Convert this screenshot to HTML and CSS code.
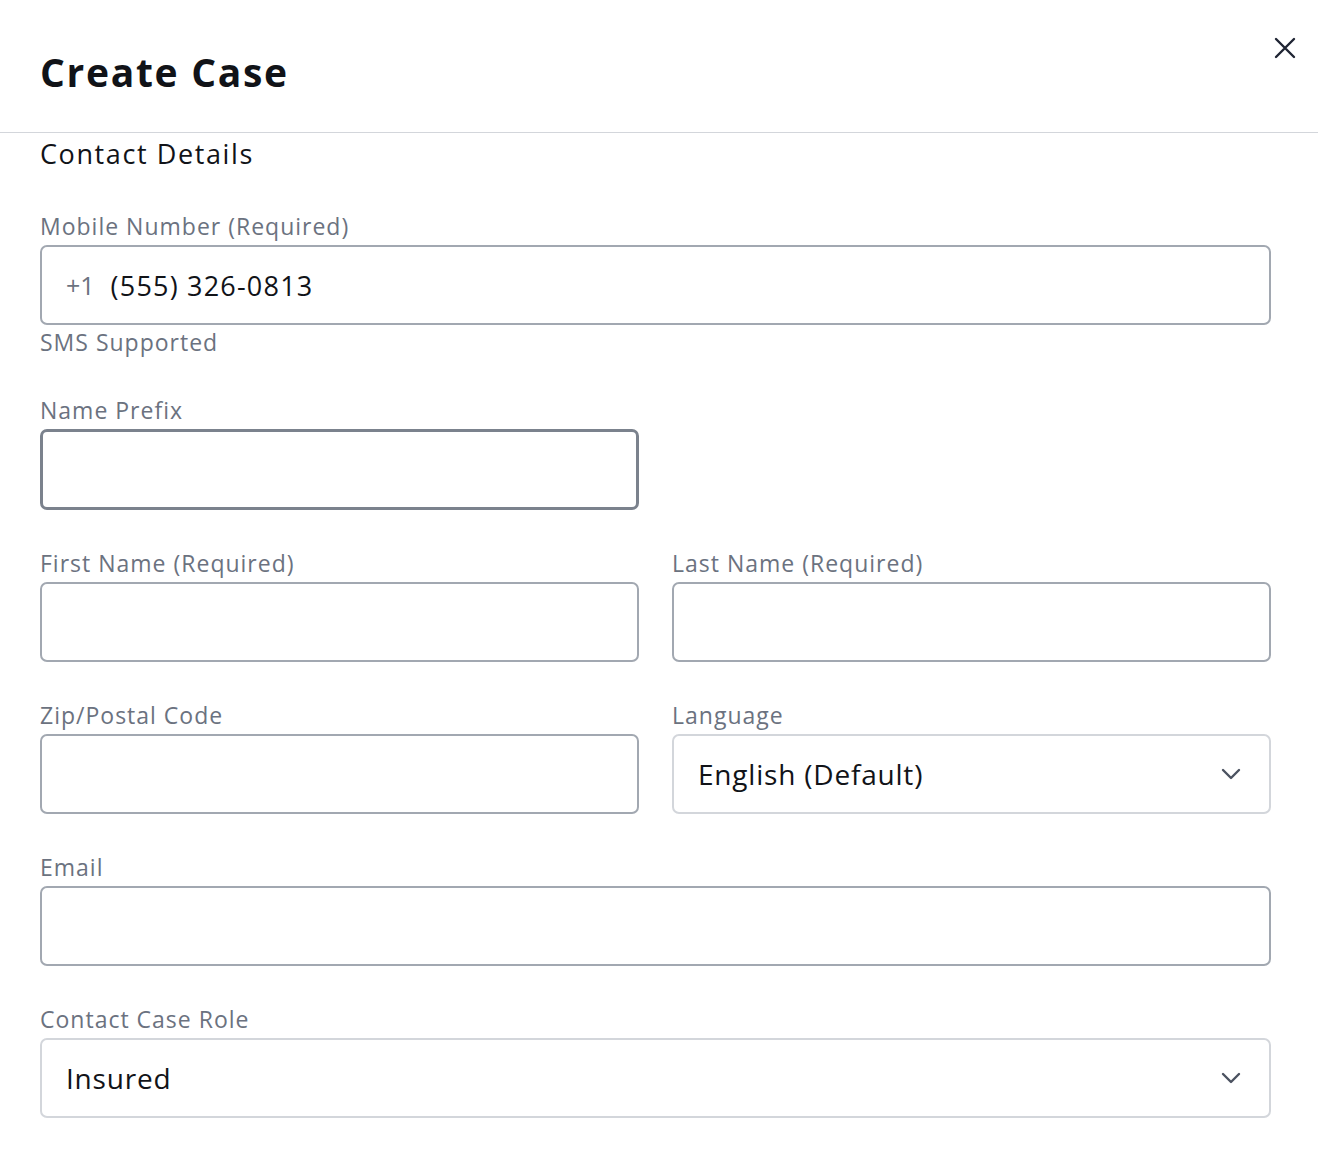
FILE: index.html
```html
<!DOCTYPE html>
<html lang="en">
<head>
    <meta charset="UTF-8">
    <meta name="viewport" content="width=device-width, initial-scale=1.0">
    <title>Create Case</title>
    <link rel="stylesheet" href="styles.css">
</head>
<body>
    <div class="modal">
        <div class="modal-header">
            <h1>Create Case</h1>
            <button class="close-btn" aria-label="Close">
                <svg width="22" height="22" viewBox="0 0 22 22" fill="none">
                    <path d="M2 2L20 20M20 2L2 20" stroke="#1f2433" stroke-width="2.4" stroke-linecap="round"/>
                </svg>
            </button>
        </div>

        <div class="modal-body">
            <h2>Contact Details</h2>

            <div class="form-grid">
                <div class="field full">
                    <label>Mobile Number (Required)</label>
                    <div class="input phone">
                        <span class="dial">+1</span>
                        <span class="value">(555) 326-0813</span>
                    </div>
                    <div class="hint">SMS Supported</div>
                </div>

                <div class="field">
                    <label>Name Prefix</label>
                    <div class="input focused"></div>
                </div>
                <div class="field"></div>

                <div class="field">
                    <label>First Name (Required)</label>
                    <div class="input"></div>
                </div>
                <div class="field">
                    <label>Last Name (Required)</label>
                    <div class="input"></div>
                </div>

                <div class="field">
                    <label>Zip/Postal Code</label>
                    <div class="input"></div>
                </div>
                <div class="field">
                    <label>Language</label>
                    <div class="input select">
                        <span class="value">English (Default)</span>
                        <svg class="chevron" width="20" height="12" viewBox="0 0 20 12" fill="none">
                            <path d="M2 2L10 10L18 2" stroke="#4b5260" stroke-width="2.4" stroke-linecap="round" stroke-linejoin="round"/>
                        </svg>
                    </div>
                </div>

                <div class="field full">
                    <label>Email</label>
                    <div class="input"></div>
                </div>

                <div class="field full">
                    <label>Contact Case Role</label>
                    <div class="input select">
                        <span class="value">Insured</span>
                        <svg class="chevron" width="20" height="12" viewBox="0 0 20 12" fill="none">
                            <path d="M2 2L10 10L18 2" stroke="#4b5260" stroke-width="2.4" stroke-linecap="round" stroke-linejoin="round"/>
                        </svg>
                    </div>
                </div>
            </div>
        </div>
    </div>
</body>
</html>
```

FILE: styles.css
```css
:root {
    --text: #111318;
    --muted: #6b7280;
    --border: #a2a8b1;
    --border-light: #d3d6db;
    --focus: #7b828d;
}

* {
    box-sizing: border-box;
}

body {
    margin: 0;
    font-family: 'Open Sans', 'Noto Sans', sans-serif;
    color: var(--text);
    background: #fff;
}

.modal {
    width: 1318px;
    min-height: 1156px;
}

.modal-header {
    display: flex;
    justify-content: space-between;
    align-items: flex-start;
    height: 133px;
    padding: 0 22px 0 40px;
    border-bottom: 1px solid var(--border-light);
}

.modal-header h1 {
    margin: 48px 0 0;
    font-size: 39px;
    line-height: 48px;
    font-weight: 700;
    letter-spacing: 1.7px;
}

.close-btn {
    margin-top: 37px;
    padding: 0;
    border: none;
    background: none;
    cursor: pointer;
}

.modal-body {
    padding: 4px 47px 40px 40px;
}

.modal-body h2 {
    margin: 0 0 40px;
    font-size: 27px;
    line-height: 34px;
    font-weight: 500;
    letter-spacing: 1.6px;
}

.form-grid {
    display: grid;
    grid-template-columns: 1fr 1fr;
    column-gap: 33px;
    row-gap: 38px;
}

.field.full {
    grid-column: 1 / -1;
}

.field label {
    display: block;
    margin-bottom: 4px;
    font-size: 23px;
    line-height: 30px;
    letter-spacing: 1px;
    color: var(--muted);
}

.input {
    display: flex;
    align-items: center;
    height: 80px;
    padding: 0 24px;
    border: 2px solid var(--border);
    border-radius: 7px;
    background: #fff;
}

.input.focused {
    height: 81px;
    border: 3px solid var(--focus);
}

.input.select {
    justify-content: space-between;
    border-color: var(--border-light);
    padding: 0 28px 0 24px;
}

.input .value {
    font-size: 28px;
    letter-spacing: 0.8px;
    color: var(--text);
}

.phone .dial {
    font-size: 25px;
    color: var(--muted);
    margin-right: 16px;
}

.phone .value {
    font-size: 27px;
    letter-spacing: 1.2px;
}

.hint {
    margin-top: 2px;
    font-size: 23px;
    line-height: 30px;
    letter-spacing: 1px;
    color: var(--muted);
}
```
